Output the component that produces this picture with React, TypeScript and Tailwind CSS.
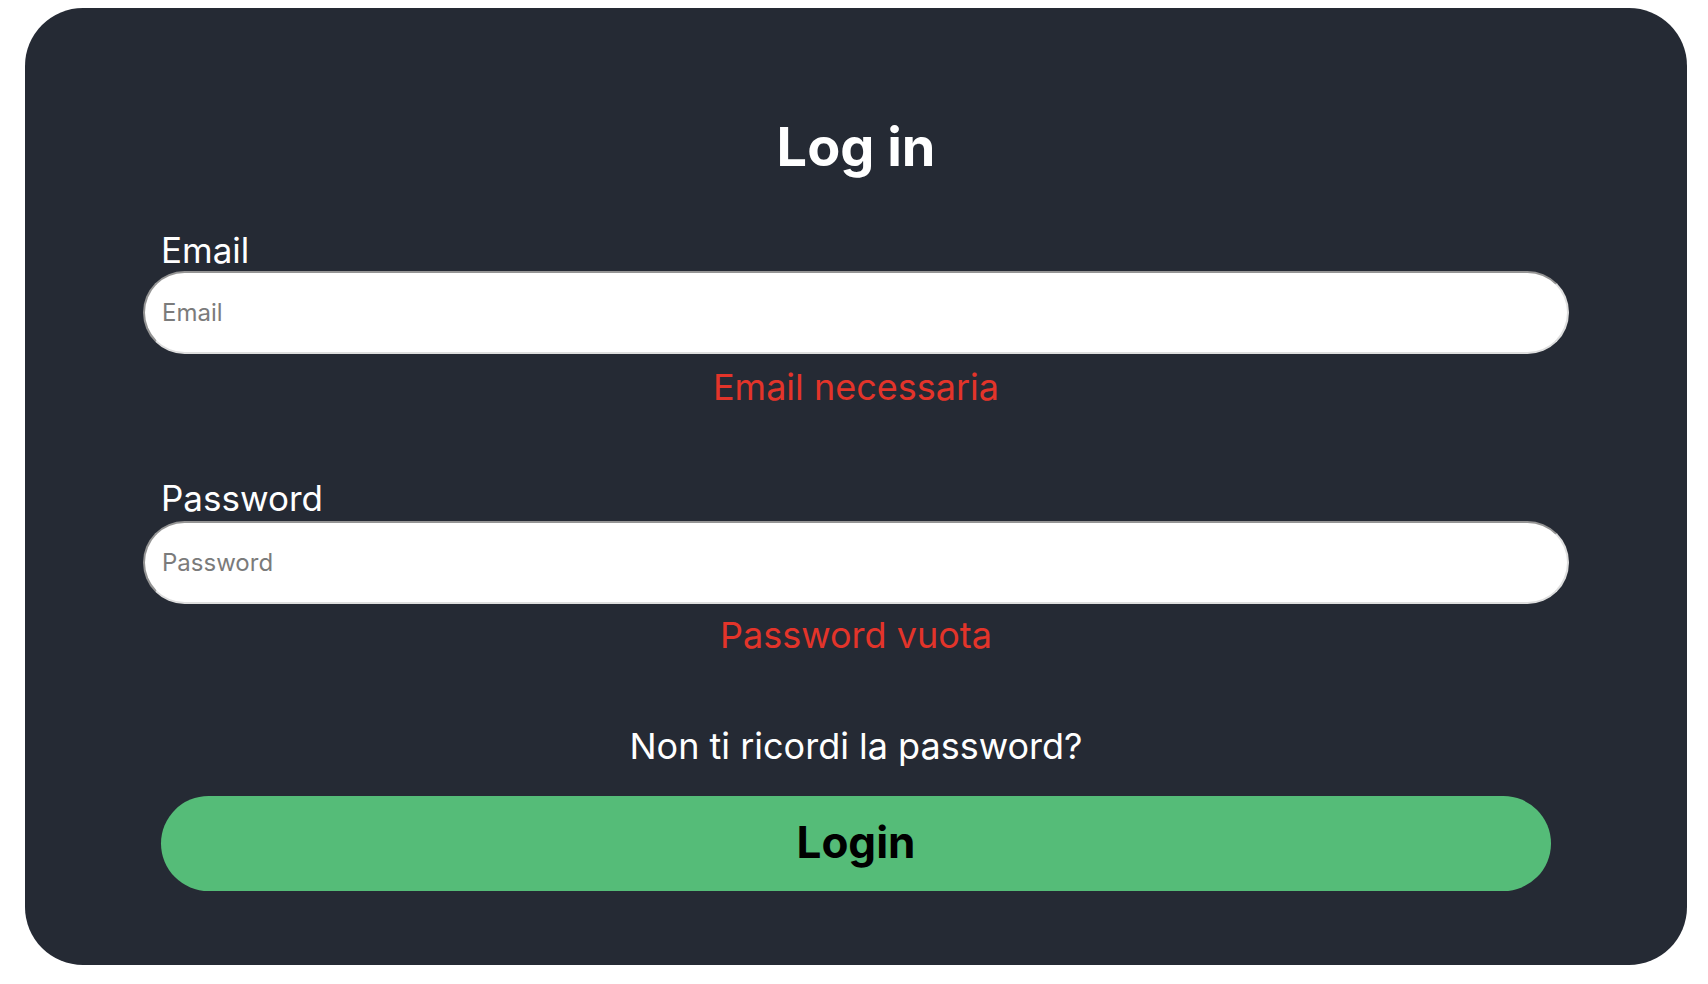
import React from "react";

export default function App() {
  const font = { fontFamily: 'Inter, "Noto Sans", sans-serif' };
  return (
    <div className="w-[1708px] h-[984px] bg-white pt-[8px] pl-[25px]" style={font}>
      <div className="w-[1662px] h-[957px] bg-[#252a34] rounded-[58px] flex flex-col px-[118px] pt-[112px] pb-[72px]">
        <h1 className="text-center text-white font-bold text-[54px] leading-none">Log in</h1>

        <label className="mt-[59px] ml-[18px] text-white text-[35px] leading-none">Email</label>
        <input
          type="email"
          placeholder="Email"
          className="mt-[3px] h-[83px] w-full rounded-full bg-white px-[17px] text-[24px] text-black placeholder:text-[#7b7b7b] outline-none border-2 border-t-[#949494] border-l-[#949494] border-b-[#dedede] border-r-[#dedede]"
        />
        <p className="mt-[15px] text-center text-[#e3342a] text-[36px] leading-none">Email necessaria</p>

        <label className="mt-[76px] ml-[18px] text-white text-[35px] leading-none">Password</label>
        <input
          type="password"
          placeholder="Password"
          className="mt-[5px] h-[83px] w-full rounded-full bg-white px-[17px] text-[24px] text-black placeholder:text-[#7b7b7b] outline-none border-2 border-t-[#949494] border-l-[#949494] border-b-[#dedede] border-r-[#dedede]"
        />
        <p className="mt-[13px] text-center text-[#e3342a] text-[36px] leading-none">Password vuota</p>

        <p className="mt-[75px] text-center text-white text-[36px] leading-none">Non ti ricordi la password?</p>

        <button className="mt-[32px] mx-[18px] h-[95px] rounded-full bg-[#55bc78] text-black font-bold text-[44px] leading-none pb-[3px]">
          Login
        </button>
      </div>
    </div>
  );
}
